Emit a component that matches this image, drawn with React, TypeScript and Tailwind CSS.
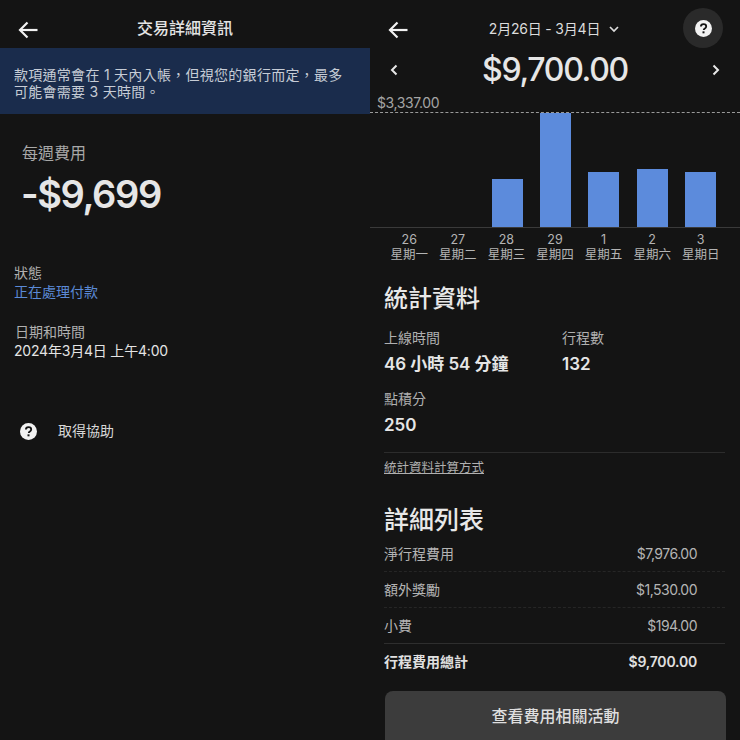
import React from "react";

const FONT = "font-['Inter','Noto_Sans_CJK_TC',sans-serif]";

function BackArrow() {
  return (
    <svg width="20" height="18" viewBox="0 0 20 18" fill="none" stroke="#f2f2f2" strokeWidth="2.2">
      <path d="M19.5 9H2" />
      <path d="M9.5 1.5 2 9l7.5 7.5" />
    </svg>
  );
}

function HelpIcon({ size }: { size: number }) {
  return (
    <svg width={size} height={size} viewBox="0 0 24 24">
      <circle cx="12" cy="12" r="12" fill="#f2f2f2" />
      <path d="M8.3 9.3c0-2.1 1.6-3.5 3.8-3.5s3.7 1.3 3.7 3.2c0 1.5-.8 2.3-1.9 3-1 .7-1.5 1.1-1.5 2.2" fill="none" stroke="#141414" strokeWidth="2.6" />
      <rect x="10.6" y="16" width="2.8" height="2.8" fill="#141414" />
    </svg>
  );
}

const bars = [
  { d: "26", w: "星期一", h: 0 },
  { d: "27", w: "星期二", h: 0 },
  { d: "28", w: "星期三", h: 48 },
  { d: "29", w: "星期四", h: 114 },
  { d: "1", w: "星期五", h: 55 },
  { d: "2", w: "星期六", h: 58 },
  { d: "3", w: "星期日", h: 55 },
];

const rows = [
  { l: "淨行程費用", v: "$7,976.00", line: "border-dashed border-[#262626]" },
  { l: "額外獎勵", v: "$1,530.00", line: "border-dashed border-[#262626]" },
  { l: "小費", v: "$194.00", line: "border-solid border-[#2e2e2e]" },
];

export default function App() {
  return (
    <div className={`${FONT} flex h-[740px] w-[740px] overflow-hidden bg-[#141414] text-[#e8e8e8]`}>
      {/* Left panel */}
      <div className="w-[370px] shrink-0">
        <div className="relative flex h-[48px] items-center justify-center pt-[8px]">
          <div className="absolute left-[18px] top-[21px]"><BackArrow /></div>
          <span className="text-[16px] font-medium leading-[20px] text-[#e4e4e4]">交易詳細資訊</span>
        </div>
        <div className="h-[66px] bg-[#1a2c4c] pl-[14px] pr-[10px] pt-[18px] text-[14px] leading-[17px] tracking-[0.28px] text-[#c6ccd6]">
          <p>{"款項通常會在 1 天內入帳\uFF0C但視您的銀行而定\uFF0C最多"}</p>
          <p>可能會需要 3 天時間。</p>
        </div>
        <div className="pl-[22px] pt-[28px]">
          <p className="text-[16px] leading-[22px] text-[#a8a8a8]">每週費用</p>
          <p className="-ml-[1px] mt-[6px] text-[38px] font-semibold leading-[48px] tracking-[-1.4px] text-[#e6e6e6]">-$9,699</p>
        </div>
        <div className="pl-[14px] pt-[45px] text-[14px] leading-[19px]">
          <p className="text-[#b0b0b0]">狀態</p>
          <p className="text-[#5b8ad6]">正在處理付款</p>
          <p className="mt-[21px] pl-[1px] text-[#b0b0b0]">日期和時間</p>
          <p className="tracking-[-0.2px] text-[#e4e4e4]">2024年3月4日 上午4:00</p>
        </div>
        <div className="flex items-center pl-[20px] pt-[61px]">
          <HelpIcon size={17} />
          <span className="ml-[21px] text-[14px] leading-[20px] text-[#d8d8d8]">取得協助</span>
        </div>
      </div>

      {/* Right panel */}
      <div className="w-[370px] shrink-0">
        <div className="relative h-[48px]">
          <div className="absolute left-[18px] top-[21px]"><BackArrow /></div>
          <div className="flex items-center justify-center gap-[9px] pr-[2px] pt-[19px] text-[14px] leading-[20px] tracking-[-0.2px] text-[#dcdcdc]">
            <span>2月26日 - 3月4日</span>
            <svg width="10" height="7" viewBox="0 0 10 7" fill="none" stroke="#dcdcdc" strokeWidth="1.7"><path d="M1 1l4 4 4-4" /></svg>
          </div>
          <div className="absolute left-[313px] top-[8px] flex h-[40px] w-[40px] items-center justify-center rounded-full bg-[#2a2a2a]">
            <HelpIcon size={17} />
          </div>
        </div>
        <div className="flex items-center justify-between pl-[20px] pr-[20px]">
          <svg width="8" height="12" viewBox="0 0 8 12" fill="none" stroke="#e8e8e8" strokeWidth="2"><path d="M6.5 1.5 2 6l4.5 4.5" /></svg>
          <span className="text-[32px] font-medium leading-[44px] tracking-[-1.3px] text-[#e6e6e6]">$9,700.00</span>
          <svg width="8" height="12" viewBox="0 0 8 12" fill="none" stroke="#e8e8e8" strokeWidth="2"><path d="M1.5 1.5 6 6l-4.5 4.5" /></svg>
        </div>
        <p className="pl-[7px] pt-[1px] text-[14px] leading-[19px] tracking-[-0.4px] text-[#a4a4a4]">$3,337.00</p>
        <div className="border-t border-dashed border-[#9a9a9a]" />
        <div className="grid h-[115px] grid-cols-7 border-b border-[#3a3a3a] pl-[16px] pr-[15px]">
          {bars.map((b) => (
            <div key={b.d} className="flex items-end justify-center">
              {b.h > 0 && <div className="w-[31px] bg-[#5c8bdc]" style={{ height: b.h }} />}
            </div>
          ))}
        </div>
        <div className="grid grid-cols-7 px-[15px] pt-[4px] text-center text-[12.5px] leading-[15px] text-[#b4b4b4]">
          {bars.map((b) => (
            <div key={b.d}>
              <p>{b.d}</p>
              <p>{b.w}</p>
            </div>
          ))}
        </div>

        <div className="pl-[14px] pr-[15px]">
          <h2 className="pt-[20px] text-[24px] font-medium leading-[34px] text-[#e8e8e8]">統計資料</h2>
          <div className="mt-[12px] flex">
            <div className="w-[178px]">
              <p className="text-[14px] leading-[20px] text-[#b0b0b0]">上線時間</p>
              <p className="mt-[4px] text-[17px] font-semibold leading-[24px] tracking-[-0.05px] text-[#e6e6e6]">46 小時 54 分鐘</p>
            </div>
            <div>
              <p className="text-[14px] leading-[20px] text-[#b0b0b0]">行程數</p>
              <p className="mt-[4px] text-[17px] font-semibold leading-[24px] text-[#e6e6e6]">132</p>
            </div>
          </div>
          <p className="mt-[13px] text-[14px] leading-[20px] text-[#b0b0b0]">點積分</p>
          <p className="mt-[4px] text-[17px] font-semibold leading-[24px] text-[#e6e6e6]">250</p>
          <div className="mt-[15px] border-t border-[#2c2c2c]" />
          <p className="pt-[5px] text-[12.5px] leading-[20px] text-[#b0b0b0] underline">統計資料計算方式</p>
          <h2 className="pt-[24px] text-[25px] font-medium leading-[36px] text-[#e8e8e8]">詳細列表</h2>
          <div className="-mt-[2px]">
            {rows.map((r) => (
              <div key={r.l} className={`flex h-[36px] items-center justify-between border-b pb-[1px] pr-[28px] text-[14px] text-[#b4b4b4] ${r.line}`}>
                <span>{r.l}</span>
                <span className="tracking-[-0.5px]">{r.v}</span>
              </div>
            ))}
            <div className="flex h-[35px] items-center justify-between pr-[28px] text-[14px] font-semibold text-[#e0e0e0]">
              <span>行程費用總計</span>
              <span className="tracking-[-0.2px]">$9,700.00</span>
            </div>
          </div>
          <button className="ml-[1px] mt-[12px] flex h-[60px] w-[341px] items-start justify-center rounded-[8px] bg-[#3c3c3c] pt-[14px] text-[16px] font-medium leading-[22px] text-[#dedede]">
            查看費用相關活動
          </button>
        </div>
      </div>
    </div>
  );
}
